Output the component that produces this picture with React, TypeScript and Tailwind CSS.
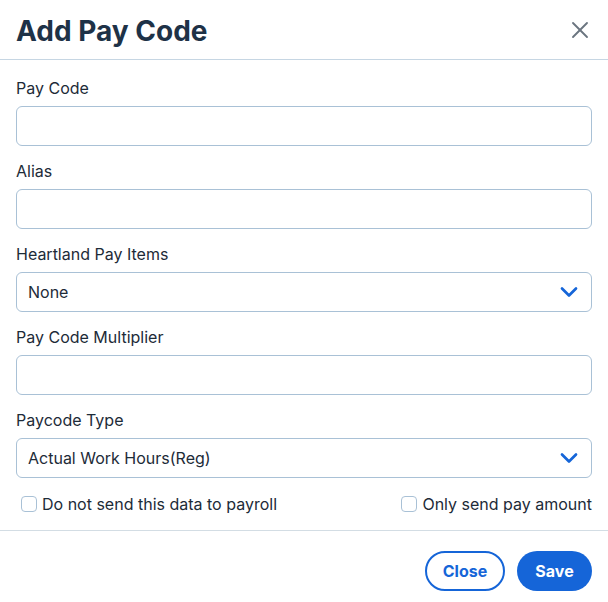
import { X, ChevronDown } from 'lucide-react'

const Field = ({ label, children }: { label: string; children: React.ReactNode }) => (
  <div className="flex flex-col">
    <label className="text-[16px] leading-5 text-[#1d2b38]">{label}</label>
    <div className="mt-2">{children}</div>
  </div>
)

const TextInput = () => (
  <input
    type="text"
    className="h-10 w-full rounded-md border border-[#a9c1d6] bg-white px-3 text-[16px] outline-none"
  />
)

const SelectBox = ({ value }: { value: string }) => (
  <div className="flex h-10 w-full items-center justify-between rounded-md border border-[#a9c1d6] bg-white pl-[11px] pr-2">
    <span className="text-[16px] text-[#1d2b38]">{value}</span>
    <ChevronDown className="h-7 w-7 text-[#1565d8]" strokeWidth={2.3} />
  </div>
)

const Check = ({ label }: { label: string }) => (
  <label className="flex items-center gap-[5px] text-[16px] text-[#1d2b38]">
    <span className="h-4 w-4 rounded-[4px] border border-[#a9c1d6] bg-white" />
    {label}
  </label>
)

export default function App() {
  return (
    <div
      className="flex h-[602px] w-[608px] flex-col bg-white"
      style={{ fontFamily: 'Inter, "Noto Sans", sans-serif' }}
    >
      <div className="flex h-[60px] items-center justify-between border-b border-[#c6d6e3] pl-4 pr-[14px]">
        <h1 className="pt-[2px] text-[28px] font-bold text-[#1e3247]">Add Pay Code</h1>
        <X className="h-7 w-7 text-[#6b7580]" strokeWidth={1.6} />
      </div>
      <div className="flex flex-col gap-[15px] px-4 pt-[18px]">
        <Field label="Pay Code">
          <TextInput />
        </Field>
        <Field label="Alias">
          <TextInput />
        </Field>
        <Field label="Heartland Pay Items">
          <SelectBox value="None" />
        </Field>
        <Field label="Pay Code Multiplier">
          <TextInput />
        </Field>
        <Field label="Paycode Type">
          <SelectBox value="Actual Work Hours(Reg)" />
        </Field>
      </div>
      <div className="flex h-[53px] items-center justify-between border-b border-[#d3dde4] pl-[21px] pr-4">
        <Check label="Do not send this data to payroll" />
        <Check label="Only send pay amount" />
      </div>
      <div className="flex justify-end gap-3 px-4 pt-[20px]">
        <button className="h-10 w-20 rounded-full border-2 border-[#1565d8] bg-white text-[16px] font-bold text-[#1565d8]">
          Close
        </button>
        <button className="h-10 w-[75px] rounded-full bg-[#1565d8] text-[16px] font-bold text-white">
          Save
        </button>
      </div>
    </div>
  )
}
